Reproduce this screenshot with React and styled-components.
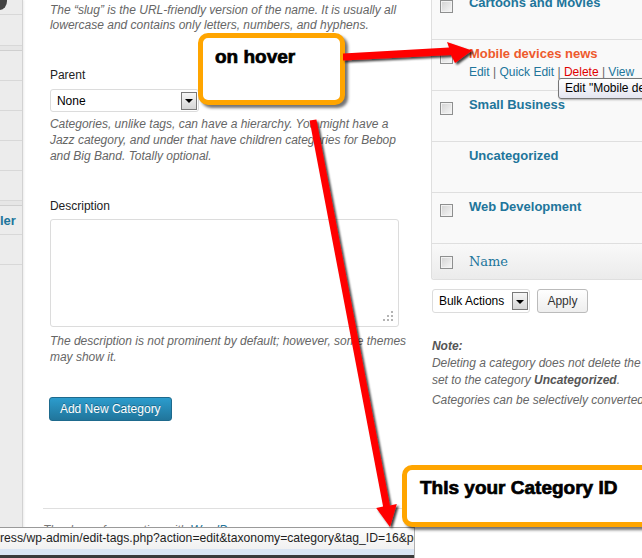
import React from "react";
import styled, { createGlobalStyle } from "styled-components";

const GlobalStyle = createGlobalStyle`
  html, body {
    margin: 0;
    padding: 0;
    background: #fff;
  }
  body {
    font-family: "Liberation Sans", Arial, sans-serif;
    font-size: 12px;
    color: #333;
    overflow: hidden;
  }
`;

const Screen = styled.div`
  position: relative;
  width: 642px;
  height: 558px;
  overflow: hidden;
  display: flex;
  background: #fff;
`;

const AdminMenu = styled.div`
  flex: 0 0 22px;
  box-sizing: border-box;
  background: #ececec;
  border-right: 1px solid #d2d2d2;
  box-shadow: 1px 0 2px rgba(0, 0, 0, 0.08);
  z-index: 1;
`;

const MenuItem = styled.div`
  height: ${(p) => p.$h}px;
  box-sizing: border-box;
  border-bottom: 1px solid #d8d8d8;
  display: flex;
  align-items: ${(p) => (p.$top ? "flex-start" : "center")};
  justify-content: flex-end;
  overflow: hidden;
  padding-right: 6px;
  ${(p) => p.$top && "padding-right: 0; justify-content: flex-start;"}
`;

const MenuGap = styled.div`
  height: 5px;
  box-sizing: border-box;
  border-bottom: 1px solid #cfcfcf;
  background: #e6e6e6;
`;

const MenuIcon = styled.div`
  width: 7px;
  height: 10px;
  background: #444;
  border-radius: 0 0 7px 0 / 0 0 9px 0;
`;

const MenuLabel = styled.span`
  color: #21759b;
  font-weight: bold;
  font-size: 13px;
  white-space: nowrap;
`;

const Main = styled.div`
  flex: 1;
  min-width: 0;
  display: flex;
  flex-direction: column;
`;

const Columns = styled.div`
  flex: 1;
  display: flex;
  min-height: 0;
`;

const FormCol = styled.div`
  flex: 0 0 408px;
  box-sizing: border-box;
  padding: 3px 0 0 27px;
  display: flex;
  flex-direction: column;
  align-items: flex-start;
`;

const Help = styled.p`
  margin: ${(p) => p.$mt}px 0 0;
  font-style: italic;
  color: #666;
  line-height: ${(p) => p.$lh}px;
  white-space: nowrap;
`;

const Label = styled.div`
  margin-top: ${(p) => p.$mt}px;
  line-height: 15px;
  color: #222;
`;

const Select = styled.div`
  margin-top: ${(p) => p.$mt}px;
  width: ${(p) => p.$w}px;
  height: ${(p) => p.$h}px;
  box-sizing: border-box;
  display: flex;
  align-items: center;
  padding-left: 6px;
  border: 1px solid #dcdcdc;
  border-radius: 3px;
  background: #fff;
  color: #000;
`;

const SelectArrow = styled.div`
  margin-left: auto;
  margin-right: 1px;
  width: 16px;
  height: 18px;
  box-sizing: border-box;
  border: 1px solid #7a7a7a;
  background: linear-gradient(#f6f6f6, #d6d6d6);
  display: flex;
  align-items: center;
  justify-content: center;
  &::after {
    content: "";
    border-left: 4px solid transparent;
    border-right: 4px solid transparent;
    border-top: 4px solid #000;
    margin-top: 1px;
  }
`;

const TextBox = styled.div`
  margin-top: 5px;
  width: 349px;
  height: 108px;
  box-sizing: border-box;
  border: 1px solid #dcdcdc;
  border-radius: 3px;
  background: #fff;
  display: flex;
  align-items: flex-end;
  justify-content: flex-end;
  padding: 0 4px 4px 0;
`;

const PrimaryButton = styled.button`
  margin: 32px 0 0 -1px;
  height: 24px;
  padding: 0 10px;
  border: 1px solid #1e6a8d;
  border-radius: 3px;
  background: linear-gradient(#2c9ccd, #21759b);
  color: #fff;
  font-family: "Liberation Sans", Arial, sans-serif;
  font-size: 12px;
  text-shadow: 0 -1px 0 rgba(0, 0, 0, 0.3);
`;

const ListCol = styled.div`
  flex: 0 0 300px;
`;

const Table = styled.div`
  margin-top: -11px;
  border: 1px solid #dfdfdf;
  border-top: none;
  border-right: none;
  border-radius: 0 0 0 3px;
  background: #f9f9f9;
`;

const Row = styled.div`
  position: relative;
  display: flex;
  height: ${(p) => (p.$foot ? 35 : 51)}px;
  box-sizing: border-box;
  border-bottom: ${(p) => (p.$foot ? "none" : "1px solid #dfdfdf")};
  ${(p) => p.$foot && "background: linear-gradient(#f9f9f9, #ebebeb); border-radius: 0 0 0 3px;"}
`;

const CheckCell = styled.div`
  flex: 0 0 37px;
  box-sizing: border-box;
  padding: ${(p) => p.$top}px 0 0 8px;
`;

const Checkbox = styled.div`
  width: 13px;
  height: 13px;
  box-sizing: border-box;
  border: 1px solid #8e8f8f;
  background: linear-gradient(135deg, #d2d2d2, #f7f7f7);
  box-shadow: inset 0 0 0 1px #f2f2f2;
`;

const NameCell = styled.div`
  flex: 1;
  padding-top: 5px;
`;

const RowTitle = styled.div`
  font-size: 13px;
  font-weight: bold;
  line-height: 17px;
  white-space: nowrap;
  color: ${(p) => (p.$hover ? "#ee5a2c" : "#21759b")};
`;

const RowActions = styled.div`
  margin-top: 2px;
  line-height: 16px;
  white-space: nowrap;
  color: #666;
`;

const Action = styled.span`
  color: ${(p) => (p.$danger ? "#e00000" : "#21759b")};
`;

const Tooltip = styled.div`
  position: absolute;
  left: 126px;
  top: 38px;
  height: 21px;
  box-sizing: border-box;
  padding: 0 6px;
  line-height: 19px;
  border: 1px solid #767676;
  border-radius: 3px;
  background: linear-gradient(#ffffff, #e4e5f0);
  box-shadow: 1px 1px 2px rgba(0, 0, 0, 0.3);
  color: #000;
  white-space: nowrap;
  z-index: 2;
`;

const HeadName = styled.div`
  padding-top: 9px;
  font-family: "DejaVu Serif", Georgia, serif;
  font-size: 13px;
  line-height: 17px;
  color: #21759b;
`;

const BulkBar = styled.div`
  margin: 9px 0 0 1px;
  display: flex;
  gap: 7px;
`;

const Button = styled.button`
  width: 51px;
  height: 24px;
  padding: 0;
  border: 1px solid #bbb;
  border-radius: 3px;
  background: linear-gradient(#fefefe, #eeeeee);
  color: #333;
  font-family: "Liberation Sans", Arial, sans-serif;
  font-size: 12px;
`;

const Note = styled.p`
  margin: ${(p) => p.$mt}px 0 0 1px;
  font-style: italic;
  color: #666;
  line-height: 17px;
  white-space: nowrap;
  strong {
    color: #555;
  }
`;

const Footer = styled.div`
  flex: 0 0 50px;
  box-sizing: border-box;
  margin-left: 20px;
  border-top: 1px solid #dfdfdf;
  padding-top: 14px;
  font-style: italic;
  color: #777;
  line-height: 15px;
  a {
    color: #21759b;
    text-decoration: none;
  }
`;

const StatusBar = styled.div`
  position: absolute;
  left: 0;
  bottom: 0;
  width: 414px;
  display: flex;
  flex-direction: column;
  border-top: 1px solid #9a9a9a;
  border-right: 1px solid #b0b0b0;
  background: linear-gradient(#fdfdfd, #ececec);
  z-index: 4;
`;

const StatusText = styled.div`
  height: 21px;
  line-height: 21px;
  font-size: 12.2px;
  color: #1e1e1e;
  white-space: nowrap;
  overflow: hidden;
`;

const StatusBand = styled.div`
  height: 6px;
  background: #dae5f3;
`;

const StatusEdge = styled.div`
  height: 3px;
  background: #3a3a3a;
`;

const Callout = styled.div`
  position: absolute;
  left: ${(p) => p.$x}px;
  top: ${(p) => p.$y}px;
  width: ${(p) => p.$w}px;
  height: ${(p) => p.$h}px;
  box-sizing: border-box;
  padding: ${(p) => p.$pad};
  border: 5px solid #ffa500;
  border-radius: 10px;
  background: #fff;
  box-shadow: 3px 3px 3px rgba(0, 0, 0, 0.55);
  font-family: "Liberation Sans", Arial, sans-serif;
  font-weight: bold;
  font-size: 19px;
  line-height: 22px;
  color: #000;
  -webkit-text-stroke: 0.7px #000;
  white-space: nowrap;
  z-index: 5;
`;

const Arrows = styled.svg`
  position: absolute;
  left: 0;
  top: 0;
  z-index: 6;
  pointer-events: none;
`;

const Grip = () => (
  <svg width="12" height="12" viewBox="0 0 12 12">
    {[
      [9, 1],
      [5, 5],
      [9, 5],
      [1, 9],
      [5, 9],
      [9, 9],
    ].map(([x, y]) => (
      <rect key={`${x}-${y}`} x={x} y={y} width="2" height="2" fill="#b4b4b4" />
    ))}
  </svg>
);

const menu = [
  { h: 15, top: true },
  { h: 31, gap: true },
  { h: 30 },
  { h: 30 },
  { h: 30 },
  { h: 30 },
  { h: 30, gap: true },
  { h: 29, label: "ler" },
  { h: 30 },
];

const categories = [
  { name: "Cartoons and Movies", check: true },
  { name: "Mobile devices news", hover: true },
  { name: "Small Business", check: true },
  { name: "Uncategorized", check: false },
  { name: "Web Development", check: true },
];

const App = () => (
  <Screen>
    <GlobalStyle />
    <AdminMenu>
      {menu.map((m, i) => (
        <React.Fragment key={i}>
          <MenuItem $h={m.h} $top={m.top}>
            {m.top && <MenuIcon />}
            {m.label && <MenuLabel>{m.label}</MenuLabel>}
          </MenuItem>
          {m.gap && <MenuGap />}
        </React.Fragment>
      ))}
    </AdminMenu>
    <Main>
      <Columns>
        <FormCol>
          <Help $mt={0} $lh={15}>
            The “slug” is the URL-friendly version of the name. It is usually all
            <br />
            lowercase and contains only letters, numbers, and hyphens.
          </Help>
          <Label $mt={35}>Parent</Label>
          <Select $mt={6} $w={149} $h={23}>
            None
            <SelectArrow />
          </Select>
          <Help $mt={4} $lh={16}>
            Categories, unlike tags, can have a hierarchy. You might have a
            <br />
            Jazz category, and under that have children categories for Bebop
            <br />
            and Big Band. Totally optional.
          </Help>
          <Label $mt={35}>Description</Label>
          <TextBox>
            <Grip />
          </TextBox>
          <Help $mt={6} $lh={16}>
            The description is not prominent by default; however, some themes
            <br />
            may show it.
          </Help>
          <PrimaryButton>Add New Category</PrimaryButton>
        </FormCol>
        <ListCol>
          <Table>
            {categories.map((c) => (
              <Row key={c.name}>
                <CheckCell $top={11}>{c.check !== false && <Checkbox />}</CheckCell>
                <NameCell>
                  <RowTitle $hover={c.hover}>{c.name}</RowTitle>
                  {c.hover && (
                    <RowActions>
                      <Action>Edit</Action> | <Action>Quick Edit</Action> |{" "}
                      <Action $danger>Delete</Action> | <Action>View</Action>
                    </RowActions>
                  )}
                </NameCell>
                {c.hover && <Tooltip>Edit "Mobile devices news"</Tooltip>}
              </Row>
            ))}
            <Row $foot>
              <CheckCell $top={12}>
                <Checkbox />
              </CheckCell>
              <HeadName>Name</HeadName>
            </Row>
          </Table>
          <BulkBar>
            <Select $mt={0} $w={98} $h={24}>
              Bulk Actions
              <SelectArrow />
            </Select>
            <Button>Apply</Button>
          </BulkBar>
          <Note $mt={25}>
            <strong>Note:</strong>
            <br />
            Deleting a category does not delete the posts in that category.
            <br />
            set to the category <strong>Uncategorized</strong>.
          </Note>
          <Note $mt={3}>
            Categories can be selectively converted to tags using the category to tag converter.
          </Note>
        </ListCol>
      </Columns>
      <Footer>
        Thank you for creating with <a href="#wp">WordPress</a>.
      </Footer>
    </Main>

    <StatusBar>
      <StatusText>
        ress/wp-admin/edit-tags.php?action=edit&amp;taxonomy=category&amp;tag_ID=16&amp;post_type=post
      </StatusText>
      <StatusBand />
      <StatusEdge />
    </StatusBar>

    <Callout $x={198} $y={33} $w={147} $h={72} $pad="8px 0 0 12px">
      on hover
    </Callout>
    <Callout $x={402} $y={465} $w={270} $h={62} $pad="7px 0 0 13px">
      ThIs your Category ID
    </Callout>

    <Arrows width="642" height="558" viewBox="0 0 642 558">
      <defs>
        <filter id="shade" x="-20%" y="-20%" width="140%" height="140%">
          <feDropShadow dx="2" dy="2" stdDeviation="1.2" floodColor="#000" floodOpacity="0.75" />
        </filter>
      </defs>
      <path
        d="M343,53.5 L449,47.5 L447,42 L472,50.5 L455,63 L451,55 L343,60.5 Z"
        fill="#ff0000"
        filter="url(#shade)"
      />
      <path
        d="M309.6,120.6 L316.4,119.4 L389.9,505.4 L396.8,504.1 L390,527 L376.2,507.9 L383.1,506.6 Z"
        fill="#ff0000"
        filter="url(#shade)"
      />
    </Arrows>
  </Screen>
);

export default App;
